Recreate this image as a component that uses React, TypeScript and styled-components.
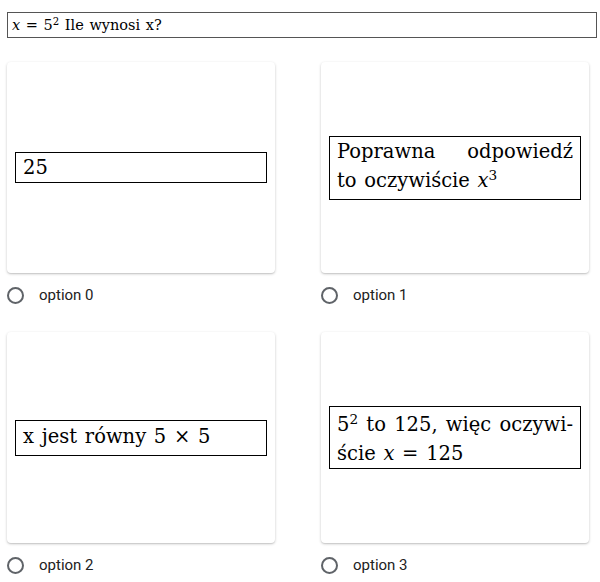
import React from "react";
import styled, { createGlobalStyle } from "styled-components";

const SERIF = `"DejaVu Serif", "Liberation Serif", serif`;

const GlobalStyle = createGlobalStyle`
  html, body { margin: 0; padding: 0; background: #ffffff; font-family: ${SERIF}; }
`;

const Page = styled.div`
  padding: 12px 3px 0 7px;
`;

const QuestionBox = styled.div`
  box-sizing: border-box;
  height: 26px;
  border: 1px solid #555555;
  padding: 0 4px;
  font-family: ${SERIF};
  font-size: 14.5px;
  line-height: 24px;
  word-spacing: 1px;
  color: #000;
`;

const Grid = styled.div`
  margin-top: 24px;
  display: grid;
  grid-template-columns: 268px 268px;
  column-gap: 46px;
  row-gap: 27px;
`;

const Cell = styled.div`
  display: flex;
  flex-direction: column;
`;

const Card = styled.div`
  box-sizing: border-box;
  height: 211px;
  background: #ffffff;
  border-radius: 4px;
  box-shadow: 0 1px 3px rgba(0, 0, 0, 0.2), 0 1px 1px rgba(0, 0, 0, 0.08);
  display: flex;
  align-items: center;
  padding: 0 8px;
`;

const MathBox = styled.div<{ $pt: number; $pb: number }>`
  flex: 1;
  min-width: 0;
  box-sizing: border-box;
  border: 1px solid #000000;
  padding: ${(p) => p.$pt}px 7px ${(p) => p.$pb}px 7px;
  font-family: ${SERIF};
  font-size: 19.5px;
  line-height: 29px;
  color: #000;
`;

const Line = styled.div<{ $justify?: boolean }>`
  text-align: ${(p) => (p.$justify ? "justify" : "left")};
  text-align-last: ${(p) => (p.$justify ? "justify" : "left")};
  word-spacing: ${(p) => (p.$justify ? "0" : "1.5px")};
  white-space: nowrap;
`;

const Sup = styled.sup`
  font-size: 0.7em;
  line-height: 0;
  vertical-align: 0.5em;
`;

const MathVar = styled.i`
  font-style: italic;
`;

const OptionRow = styled.label`
  margin-top: 12px;
  height: 20px;
  display: flex;
  align-items: center;
`;

const RadioCircle = styled.span`
  box-sizing: border-box;
  width: 17px;
  height: 17px;
  border: 2px solid #5f6368;
  border-radius: 50%;
  flex: none;
`;

const OptionLabel = styled.span`
  margin-left: 15px;
  font-family: Roboto, "Liberation Sans", sans-serif;
  font-size: 15px;
  color: #222222;
`;

type Opt = { pt: number; pb: number; content: React.ReactNode };

const options: Opt[] = [
  { pt: 0, pb: 0, content: <Line>25</Line> },
  {
    pt: 0,
    pb: 4,
    content: (
      <>
        <Line $justify>Poprawna odpowiedź</Line>
        <Line>
          to oczywiście <MathVar>x</MathVar>
          <Sup>3</Sup>
        </Line>
      </>
    ),
  },
  {
    pt: 1,
    pb: 4,
    content: <Line>x jest równy 5 × 5</Line>,
  },
  {
    pt: 3,
    pb: 0,
    content: (
      <>
        <Line $justify>
          5<Sup>2</Sup> to 125, więc oczywi-
        </Line>
        <Line>
          ście <MathVar>x</MathVar> = 125
        </Line>
      </>
    ),
  },
];

export default function App() {
  return (
    <>
      <GlobalStyle />
      <Page>
        <QuestionBox>
          <MathVar>x</MathVar> = 5<Sup>2</Sup> Ile wynosi x?
        </QuestionBox>
        <Grid>
          {options.map((o, i) => (
            <Cell key={i}>
              <Card>
                <MathBox $pt={o.pt} $pb={o.pb}>
                  {o.content}
                </MathBox>
              </Card>
              <OptionRow>
                <RadioCircle />
                <OptionLabel>option {i}</OptionLabel>
              </OptionRow>
            </Cell>
          ))}
        </Grid>
      </Page>
    </>
  );
}
